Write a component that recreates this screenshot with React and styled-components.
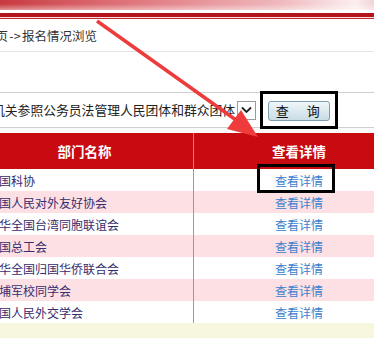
import React from "react";
import styled, { createGlobalStyle } from "styled-components";

const GlobalStyle = createGlobalStyle`
  html, body { margin: 0; padding: 0; background: #fff; }
  body { font-family: "Noto Sans CJK SC", "Noto Sans", sans-serif; overflow: hidden; }
`;

const Page = styled.div`
  position: relative;
  width: 374px;
  height: 338px;
  overflow: hidden;
  background: #fff;
`;

const Banner = styled.div`
  height: 10px;
  background:
    linear-gradient(to bottom, rgba(255,255,255,0) 40%, rgba(255,255,255,0.45) 100%),
    linear-gradient(to right, #c73a40 0%, #d9666c 25%, #e58f95 50%, #efb9be 75%, #fbeef0 95%, #f3d3d6 100%);
`;

const Rule = styled.div`
  margin-top: 3px;
  height: 1px;
  border-top: 4px solid #b4141b;
  border-bottom: 1px solid #c22a30;
  background: #f4dcdc;
`;

const Crumb = styled.div`
  height: 32px;
  display: flex;
  align-items: center;
  margin-left: -17px;
  font-size: 12.5px;
  color: #333;
  border-bottom: 1px solid #e4e4e4;
  white-space: nowrap;
  word-spacing: -1.5px;
`;

const Spacer = styled.div`
  height: 40px;
`;

const FilterRow = styled.div`
  height: 34px;
  border-top: 1px solid #cfcfcf;
  border-bottom: 1px solid #cfcfcf;
  display: flex;
  align-items: center;
`;

const SelectBox = styled.div`
  width: 264px;
  margin-left: -8px;
  height: 20px;
  display: flex;
  align-items: center;
  overflow: hidden;
  flex: none;
`;

const SelectText = styled.div`
  flex: 1;
  min-width: 0;
  overflow: hidden;
  white-space: nowrap;
  font-size: 12.8px;
  color: #222;
  line-height: 20px;
`;

const DropBtn = styled.div`
  width: 17px;
  height: 17px;
  margin-left: -3px;
  border: 1px solid #9a9a9a;
  background: #fff;
  display: flex;
  align-items: center;
  justify-content: center;
  flex: none;
`;

const QueryButton = styled.button`
  margin-left: 12px;
  width: 62px;
  height: 20px;
  padding: 0;
  flex: none;
  border: 1px solid #7d9eae;
  border-radius: 3px;
  background: linear-gradient(to bottom, #f1f7f9 0%, #dbe9ef 50%, #c9dde5 100%);
  font-family: "Noto Sans CJK SC", sans-serif;
  font-size: 13px;
  color: #111;
  letter-spacing: 2.5px;
  white-space: nowrap;
  line-height: 18px;
  margin-top: 2px;
`;

const Gap = styled.div`
  height: 5px;
  background: #fafafa;
`;

const Table = styled.div`
  margin-left: -24px;
  width: 428px;
`;

const Row = styled.div`
  display: grid;
  grid-template-columns: 218px 210px;
  height: ${(p) => (p.$head ? "36px" : "22px")};
  background: ${(p) => (p.$head ? "#c70b10" : p.$alt ? "#fde0e4" : "#fff")};
`;

const Cell = styled.div`
  display: flex;
  align-items: center;
  justify-content: ${(p) => (p.$left ? "flex-start" : "center")};
  padding-left: ${(p) => (p.$left ? "11px" : "0")};
  border-right: ${(p) => (p.$divider ? `1px solid ${p.$head ? "#e07a7e" : "#9a9a9a"}` : "none")};
  font-size: ${(p) => (p.$head ? "13.5px" : "12px")};
  font-weight: ${(p) => (p.$head ? 700 : 400)};
  color: ${(p) => (p.$head ? "#fff" : p.$link ? "#3b80cc" : "#382c6c")};
  white-space: nowrap;
`;

const Footer = styled.div`
  height: 15px;
  background: #f7f6df;
`;

const Highlight = styled.div`
  position: absolute;
  left: ${(p) => p.$x}px;
  top: ${(p) => p.$y}px;
  width: ${(p) => p.$w}px;
  height: ${(p) => p.$h}px;
  border: 3px solid #000;
  box-sizing: border-box;
  pointer-events: none;
`;

const ArrowLayer = styled.svg`
  position: absolute;
  left: 0;
  top: 0;
  pointer-events: none;
`;

const rows = [
  "中国科协",
  "中国人民对外友好协会",
  "中华全国台湾同胞联谊会",
  "中国总工会",
  "中华全国归国华侨联合会",
  "黄埔军校同学会",
  "中国人民外交学会",
];

export default function App() {
  return (
    <Page>
      <GlobalStyle />
      <Banner />
      <Rule />
      <Crumb>首页 -&gt; 报名情况浏览</Crumb>
      <Spacer />
      <FilterRow>
        <SelectBox>
          <SelectText>机关参照公务员法管理人民团体和群众团体</SelectText>
          <DropBtn>
            <svg width="11" height="8" viewBox="0 0 11 8">
              <path d="M1 1.5 L5.5 6 L10 1.5" fill="none" stroke="#222" strokeWidth="1.8" />
            </svg>
          </DropBtn>
        </SelectBox>
        <QueryButton>查{"\u3000"}询</QueryButton>
      </FilterRow>
      <Gap />
      <Table>
        <Row $head>
          <Cell $head $divider>部门名称</Cell>
          <Cell $head>查看详情</Cell>
        </Row>
        {rows.map((name, i) => (
          <Row key={name} $alt={i % 2 === 1}>
            <Cell $left $divider>{name}</Cell>
            <Cell $link>查看详情</Cell>
          </Row>
        ))}
      </Table>
      <Footer />
      <Highlight $x={260} $y={91} $w={78} $h={38} />
      <Highlight $x={257} $y={164} $w={78} $h={29} />
      <ArrowLayer width="374" height="338" viewBox="0 0 374 338">
        <line x1="97" y1="21" x2="236" y2="120" stroke="#ee3b3b" strokeWidth="3.5" />
        <polygon points="258,137 227,129 241,110" fill="#ee3b3b" />
      </ArrowLayer>
    </Page>
  );
}
